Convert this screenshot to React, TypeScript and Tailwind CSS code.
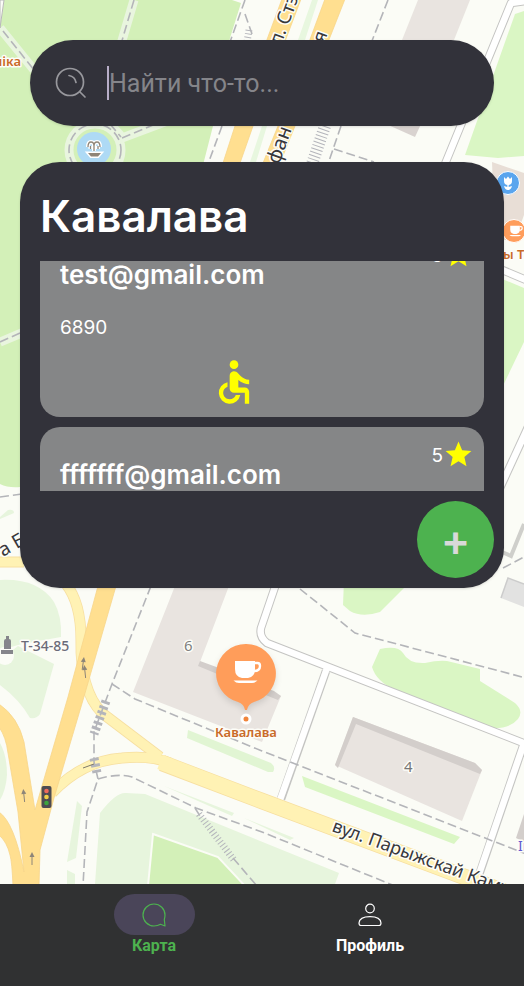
import { useLayoutEffect, useRef } from "react";
import { MdAccessible, MdStar } from "react-icons/md";

type Review = { email: string; rating: number; text: string; accessible: boolean };

const reviews: Review[] = [
  { email: "test@gmail.com", rating: 5, text: "6890", accessible: true },
  { email: "fffffff@gmail.com", rating: 5, text: "", accessible: false },
];

const GREEN = "#d3f0b8";
const LIME = "#daf6c4";
const PALE = "#e7f5dd";
const BUILDING = "#e9e4e0";
const SHADE = "#d3cecb";
const ORANGE_ROAD = "#ffdf90";
const YELLOW_ROAD = "#fff2b4";

function Cup({ x, y, s }: { x: number; y: number; s: number }) {
  return (
    <g transform={`translate(${x} ${y}) scale(${s})`}>
      <path d="M-12 -11H8V-3Q8 5 1 6H-5Q-12 5 -12 -3Z" fill="#fff" />
      <path d="M8 -9H10.5Q13 -9 13 -6Q13 -1 7 -1" fill="none" stroke="#fff" strokeWidth="2.4" />
      <path d="M-13.500 8.500H10.500Q8 11 5 11H-8Q-11 11 -13.500 8.500Z" fill="#fff" />
    </g>
  );
}

function Arrow({ x, y, r = 0 }: { x: number; y: number; r?: number }) {
  return (
    <g transform={`translate(${x} ${y}) rotate(${r})`} stroke="#8d8578" fill="#8d8578">
      <path d="M0 6V-3" strokeWidth="1" />
      <path d="M-2.500 -2L0 -7L2.500 -2Z" stroke="none" />
    </g>
  );
}

function CityMap() {
  return (
    <svg
      className="absolute inset-0 h-full w-full"
      viewBox="0 0 524 884"
      preserveAspectRatio="xMidYMin slice"
      aria-hidden="true"
    >
      <rect width="524" height="884" fill="#fbfcf6" />

      {/* parks */}
      <g fill={GREEN}>
        <path d="M4 0H232L241 3L230 38L213 126L203 165V470L20 487Q8 488 0 484V28Z" />
      </g>
      <g fill={LIME}>
        <path d="M515 14L524 11V156L498 158L465 155Z" />
        <path d="M500 278L524 288V342L500 392Z" />
        <path d="M344 580H412L380 612Q362 618 350 611L343 605Z" />
        <path d="M380 649Q398 645 403 653Q409 664 425 663Q438 660 447 661L480 669V681L515 703Q524 711 518 719Q510 729 491 728L395 690Q376 681 372 667Z" />
        <path d="M302 776L460 837L454 844L305 787Z" />
      </g>
      <g fill={PALE}>
        <path d="M0 517L8 510Q14 509 14 513L0 519Z" />
        <path d="M0 580Q38 578 54 602Q62 616 61 637L22 644L0 650Z" />
        <path d="M18 646L54 664L40 714Q37 719 30 718Q20 700 0 685V660Z" />
        <path d="M0 743Q7 755 7 775Q6 790 0 800Z" />
        <path d="M77 801L82 806L76 858L67 862Z" />
        <path d="M67 870L75 874V884H67Z" />
        <path d="M100 813Q116 792 126 793L145 794L339 873L335 884H95Z" />
        <path d="M188 730L271 763Q276 767 273 772H268L187 738Z" fill="#e1f5d3" />
        <path d="M164 786L234 813L232 816Z" />
        <path d="M244 818L294 838L290 840Z" />
      </g>
      <path d="M153 834L218 857L245 886H148Z" fill={GREEN} stroke="#fbfcf6" strokeWidth="2" />
      <circle cx="5" cy="656" r="9" fill="#fbfcf6" />
      <path d="M312 0H318L305 40H298ZM262 126H267L256 162H250Z" fill="#e8f7df" />

      {/* park paths */}
      <g fill="none" stroke="#e9f5df" strokeWidth="9">
        <path d="M0 28L34 70M134 0L121 44M122 138L170 120M0 342L24 332M110 124L121 136" />
        <circle cx="95" cy="150" r="26" />
      </g>
      <path d="M4 0L0 28V0Z" fill="#fbfcf6" stroke="#b9b9b9" />
      <circle cx="94" cy="149" r="17" fill="#aedaf5" />
      <path d="M88 153H101L98 156.500H91Z" fill="#8f8577" stroke="#fff" strokeWidth="3" paintOrder="stroke" />
      <path d="M94 151V144M88 147Q88 142 91 142Q94 142 94 146Q94 142 97 142Q100 142 100 147M90.500 149V146M98 149V146" fill="none" stroke="#fff" strokeWidth="4" />
      <path d="M94 151V144M88 147Q88 142 91 142Q94 142 94 146Q94 142 97 142Q100 142 100 147M90.500 149V146M98 149V146" fill="none" stroke="#8f8577" strokeWidth="1.300" />

      {/* buildings */}
      <g fill={BUILDING}>
        <path d="M418 0H470L454 40H402Z" />
        <path d="M386 124L415 137L421 124Z" fill="#d9d3d0" />
        <path d="M492 162L524 173V215L515 240H495Z" fill="#e8ded6" />
        <path d="M175 586H229L200 662L281 696L262 742L133 692Z" />
        <path d="M353 717L475 763L482 770L462 821L335 765Z" />
        <path d="M508 578L524 584V607L501 598Z" fill="#e2e2e1" />
        <path d="M524 814L516 838L524 842Z" fill={SHADE} />
      </g>
      <g fill={SHADE}>
        <path d="M200 661L230 672L227 678L198 666Z" />
        <path d="M258 685L274 691L281 696L278 700L258 692Z" />
        <path d="M353 717L475 763L482 770L480 774L356 724L338 768L335 765Z" />
      </g>
      <path d="M501 598L508 578L524 584" fill="none" stroke="#ccc" strokeWidth="1.500" />

      {/* service lanes: casing, then fill */}
      <g fill="none" strokeLinejoin="round">
        <g stroke="#c4c4c2" strokeWidth="8.500">
          <path d="M526 1L511 3L445 164" />
          <path d="M276 584L261 628Q259 637 267 643L526 744" />
          <path d="M326 671L281 799" />
          <path d="M523 746L478 878" />
          <path d="M528 427L500 488" />
          <path d="M500 269L526 280" />
        </g>
        <g stroke="#fff" strokeWidth="6.500">
          <path d="M526 1L511 3L445 164" />
          <path d="M276 584L261 628Q259 637 267 643L526 744" />
          <path d="M327 668L280 800" />
          <path d="M524 743L477 880" />
          <path d="M528 427L500 488" />
          <path d="M500 269L526 280" />
        </g>
        <path d="M524 524L511 556L502 552" stroke="#cfcfcb" strokeWidth="4" strokeLinejoin="miter" />
      </g>

      {/* streets */}
      <g fill="none" strokeLinejoin="round">
        <g stroke="#f7dfa0">
          <path d="M-2 562H24" strokeWidth="11" />
          <path d="M66 584Q81 603 81 640Q80 690 102 713L160 757" strokeWidth="11" />
          <path d="M52 793Q82 761 122 758Q150 755 170 763" strokeWidth="11" />
          <path d="M162 763L262 801L526 900" strokeWidth="16.500" />
        </g>
        <g stroke={YELLOW_ROAD}>
          <path d="M-2 562H24" strokeWidth="9" />
          <path d="M66 584Q81 603 81 640Q80 690 102 713L160 757" strokeWidth="9.500" />
          <path d="M52 793Q82 761 122 758Q150 755 170 763" strokeWidth="9.500" />
          <path d="M160 762L262 801L526 900" strokeWidth="15" />
        </g>
      </g>
      <g fill={ORANGE_ROAD} stroke="#f8d58a" strokeWidth="0.800">
        <path d="M98 586H116L83 700L54 798L40 850L39 886H13Q12 862 10 855Q7 842 -1 835V812Q14 822 24 872L18 812L8 753Q6 737 -1 727V704Q18 717 24 742L35 810L68 697Z" />
        <path d="M282 -1H301L253 126L240 163H223L235 126Z" />
        <path d="M325 -1H345L295 126L280 163H263L278 126Z" />
      </g>

      {/* footpaths */}
      <g fill="none" stroke="#b4b5b9" strokeWidth="1.600" strokeDasharray="9 4">
        <path d="M3 31L34 70M134 0L121 44M122 138L160 122M0 342L20 333M110 124L121 137" />
        <circle cx="95" cy="150" r="26" />
        <path d="M245 0L230 42M222 126L208 164M245 14L252 34" />
        <path d="M388 0L370 46M341 126L328 164M334 149L374 162" />
        <path d="M0 497L22 494M503 568L526 556" />
        <path d="M151 586L112 684L94 732V762L98 779L87 812L83 886" />
        <path d="M112 684L135 699L262 751L526 854" />
        <path d="M98 779Q118 773 132 777L196 808L262 832L400 888" />
        <path d="M300 589L355 633L450 658L526 678" />
        <path d="M195 808L200 816M233 858L257 886" />
      </g>
      <g fill="none" stroke="#b4b5bb">
        <path d="M106 701L94 734" strokeWidth="9" strokeDasharray="3 2.500" />
        <path d="M94 758L97 773" strokeWidth="9" strokeDasharray="3 3" />
        <path d="M199 814L234 860" strokeWidth="7" strokeDasharray="1 2.500" />
        <path d="M325 126L312 164" strokeWidth="12" strokeDasharray="1 2.500" />
        <path d="M249 30L247 42" strokeWidth="7" strokeDasharray="1 2.500" />
      </g>
      <path d="M83 768L94 764" stroke="#7e7a6d" />
      <Arrow x={83} y={664} r={8} />
      <Arrow x={85} y={672} r={-6} />
      <Arrow x={24} y={796} r={-6} />
      <Arrow x={32} y={859} />

      {/* traffic light */}
      <rect x="41.500" y="786" width="10" height="22" rx="2" fill="#4d4b52" />
      <circle cx="46.500" cy="791" r="2.300" fill="#ef6a5a" />
      <circle cx="46.500" cy="797" r="2.300" fill="#f1cf45" />
      <circle cx="46.500" cy="803" r="2.300" fill="#3ea53e" />

      {/* monument */}
      <path d="M4 649V641Q4 639 6 639V636H9V639Q11 639 11 641V649ZM1 650H13V654H1Z" fill="#85858b" />

      {/* labels */}
      <g
        fontFamily="'Noto Sans', sans-serif"
        paintOrder="stroke"
        stroke="#fdfdf8"
        strokeWidth="3"
        strokeLinejoin="round"
      >
        <g fontSize="19" fill="#38383c">
          <text transform="translate(281 46) rotate(-70)">л. Стэ</text>
          <text transform="translate(324 44) rotate(-70)">я</text>
          <text transform="translate(279 165) rotate(-70)" fontSize="20">фан</text>
          <text transform="translate(3 557) rotate(-30)">а Б</text>
          <text transform="translate(331 831) rotate(20)" fontSize="18">вул. Парыжскай Камуны</text>
        </g>
        <text x="21" y="651" fontSize="14" fontWeight="500" fill="#6b6b78">Т-34-85</text>
        <text x="184" y="651" fontSize="15" fill="#808080">6</text>
        <text x="404" y="772" fontSize="15" fill="#777">4</text>
        <text x="518" y="851" fontSize="14" fill="#6257cf">In</text>
        <g fontSize="13" fontWeight="600" fill="#c96a28">
          <text x="21" y="66" textAnchor="end">ніка</text>
          <text x="503" y="259">ы Т</text>
          <text x="246" y="737" textAnchor="middle">Кавалава</text>
        </g>
      </g>

      {/* places */}
      <circle cx="508" cy="183" r="11.500" fill="#5aa5ee" stroke="#fff" />
      <path d="M504 177L506 179L508 176.500L510 179L512 177V181Q512 185 508 185Q504 185 504 181ZM507.300 184H508.700V187L512 186Q511 190 508 190Q505 190 504 186L507.300 187Z" fill="#fff" />
      <circle cx="514" cy="231" r="11.500" fill="#ff9d5c" stroke="#fff" />
      <Cup x={516} y={231} s={0.48} />
      <g className="drop-shadow-md">
        <path d="M246 644A29.500 29.500 0 0 1 254 702Q248 704 247 710H245Q244 704 238 702A29.500 29.500 0 0 1 246 644Z" fill="#ff9d5a" />
      </g>
      <Cup x={247} y={672} s={1} />
      <circle cx="246" cy="719" r="4" fill="#f0853c" stroke="#fff" strokeWidth="3" />
    </svg>
  );
}

function SearchIcon() {
  return (
    <svg className="size-8 shrink-0" viewBox="0 0 32 32" fill="none" stroke="#98989d" strokeWidth="1.700" strokeLinecap="round" aria-hidden="true">
      <circle cx="15" cy="15" r="13.500" />
      <path d="M14 8.500Q20 9.500 21 15.500M25 25L30 30" />
    </svg>
  );
}

function ReviewCard({ review }: { review: Review }) {
  return (
    <li className="flex h-[190px] shrink-0 flex-col rounded-[20px] bg-[#858687] px-5 pt-4 text-white">
      <div className="-mr-[10px] flex h-[22px] items-center justify-end text-[19px]">
        <span className="pt-1">{review.rating}</span>
        <MdStar className="size-[31px] text-[#ffff00]" aria-label="из 5" />
      </div>
      <h2 className="text-[26px] leading-5 font-semibold">{review.email}</h2>
      <p className="mt-[33px] h-5 text-[19px] leading-5">{review.text}</p>
      <div className="mt-[18px] grid grid-cols-2 pr-1">
        {review.accessible && <MdAccessible className="size-[52px] justify-self-end text-[#ffff00]" />}
      </div>
    </li>
  );
}

export default function App() {
  const list = useRef<HTMLUListElement>(null);

  useLayoutEffect(() => {
    if (list.current) list.current.scrollTop = 34;
  }, []);

  return (
    <div className="flex min-h-screen flex-col bg-[#303132]">
      <main className="relative flex-1 overflow-hidden">
        <CityMap />
        <div className="relative px-5 pt-10 pb-10">
          <label className="mx-[10px] flex h-[86px] items-center rounded-full bg-[#32323a] pr-10 pl-[25px] shadow">
            <SearchIcon />
            <span className="ml-5 h-[34px] w-[2px] shrink-0 bg-[#b8aec8]" />
            <input
              type="text"
              aria-label="Поиск"
              placeholder="Найти что-то..."
              className="w-full min-w-0 bg-transparent pt-[2px] font-[Roboto,sans-serif] text-[25px] text-white outline-none placeholder:text-[#85858a]"
            />
          </label>

          <section className="mt-9 rounded-[40px] bg-[#32323a] px-5 pt-[25px] pb-[10px] font-[Inter,sans-serif] shadow">
            <h1 className="text-[44px] leading-[58px] font-semibold text-white">Кавалава</h1>
            <ul ref={list} className="mt-4 flex h-[230px] flex-col gap-[10px] overflow-y-auto [scrollbar-width:none]">
              {reviews.map((review) => (
                <ReviewCard key={review.email} review={review} />
              ))}
            </ul>
            <div className="-mr-[10px] mt-[10px] flex justify-end">
              <button
                type="button"
                aria-label="Добавить отзыв"
                className="flex size-[77px] items-center justify-center rounded-full bg-[#4db24f] text-[44px] leading-none font-semibold text-[#d9d9d9]"
              >
                +
              </button>
            </div>
          </section>
        </div>
      </main>

      <nav className="relative flex h-[102px] items-start px-[46px] pt-[10px] font-[Roboto,sans-serif] text-base leading-[22px] font-bold">
        <a href="#map" aria-current="page" className="flex flex-1 flex-col items-center text-[#4db24f]">
          <span className="flex h-[41px] w-[81px] items-center justify-center rounded-full bg-[#4a4559]">
            <svg className="size-6" viewBox="0 0 24 24" fill="none" stroke="currentColor" strokeWidth="1.200" strokeLinejoin="round" aria-hidden="true">
              <path d="M23 12A11 11 0 1 0 12 23C14.500 23 16.500 22.500 18.500 21.300L23 23L22.300 16.500Q23 14.500 23 12Z" />
            </svg>
          </span>
          Карта
        </a>
        <a href="#profile" className="flex flex-1 flex-col items-center text-white">
          <span className="flex h-[41px] w-[81px] items-center justify-center">
            <svg className="size-6" viewBox="0 0 24 24" fill="none" stroke="currentColor" strokeWidth="1.200" aria-hidden="true">
              <circle cx="12" cy="5.500" r="4.300" />
              <path d="M1 20Q1.500 13.700 12 13.700T23 20Q23 22.500 21 22.500H3Q1 22.500 1 20Z" />
            </svg>
          </span>
          Профиль
        </a>
      </nav>
    </div>
  );
}
